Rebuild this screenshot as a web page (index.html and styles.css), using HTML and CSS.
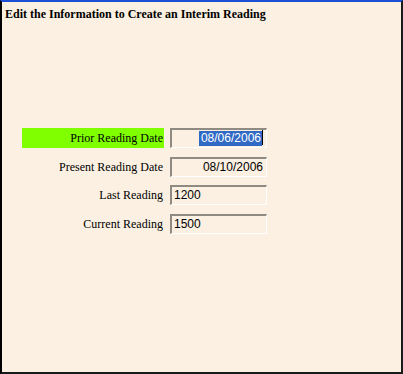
FILE: index.html
```html
<!DOCTYPE html>
<html lang="en">
<head>
  <meta charset="UTF-8">
  <title>Interim Reading</title>
  <link rel="stylesheet" href="styles.css">
</head>
<body>
  <div class="window">
    <h1 class="title">Edit the Information to Create an Interim Reading</h1>

    <div class="form">
      <div class="label active">Prior Reading Date</div>
      <div class="field right"><span class="sel">08/06/2006</span><span class="caret"></span></div>

      <div class="label">Present Reading Date</div>
      <div class="field right">08/10/2006</div>

      <div class="label">Last Reading</div>
      <div class="field">1200</div>

      <div class="label">Current Reading</div>
      <div class="field">1500</div>
    </div>
  </div>
</body>
</html>
```

FILE: styles.css
```css
html, body {
  margin: 0;
  padding: 0;
}
body {
  width: 403px;
  height: 374px;
  overflow: hidden;
}
.window {
  box-sizing: border-box;
  width: 403px;
  height: 374px;
  background: #fbf0e2;
  border-top: 2px solid #1b4fd6;
  border-left: 2px solid #000;
  border-right: 2px solid #1a1a1a;
  border-bottom: 2px solid #1a1a1a;
  font-family: "Liberation Serif", "Times New Roman", serif;
  color: #000;
}
.title {
  margin: 0;
  padding: 5px 0 0 3px;
  font-size: 12px;
  font-weight: bold;
  line-height: 14px;
}
.form {
  display: grid;
  grid-template-columns: 142px 97px;
  column-gap: 6px;
  row-gap: 8.5px;
  margin: 107px 0 0 20px;
}
.label {
  height: 20px;
  line-height: 20px;
  text-align: right;
  font-size: 12px;
  padding-right: 1px;
}
.label.active {
  background: #80ff00;
}
.field {
  box-sizing: border-box;
  height: 20px;
  line-height: 16px;
  padding: 0 3px 0 2px;
  border-top: 2px solid #8f8b83;
  border-left: 2px solid #8f8b83;
  border-right: 1px solid #fff;
  border-bottom: 1px solid #fff;
  background: #fbf0e2;
  font-family: "Liberation Sans", Arial, sans-serif;
  font-size: 12px;
  white-space: nowrap;
}
.field.right {
  text-align: right;
}
.sel {
  background: #316ac5;
  color: #fff;
  padding: 0 1px 0 2px;
  display: inline-block;
  line-height: 15px;
}
.caret {
  display: inline-block;
  width: 1px;
  height: 15px;
  background: #000;
  vertical-align: top;
}
```
